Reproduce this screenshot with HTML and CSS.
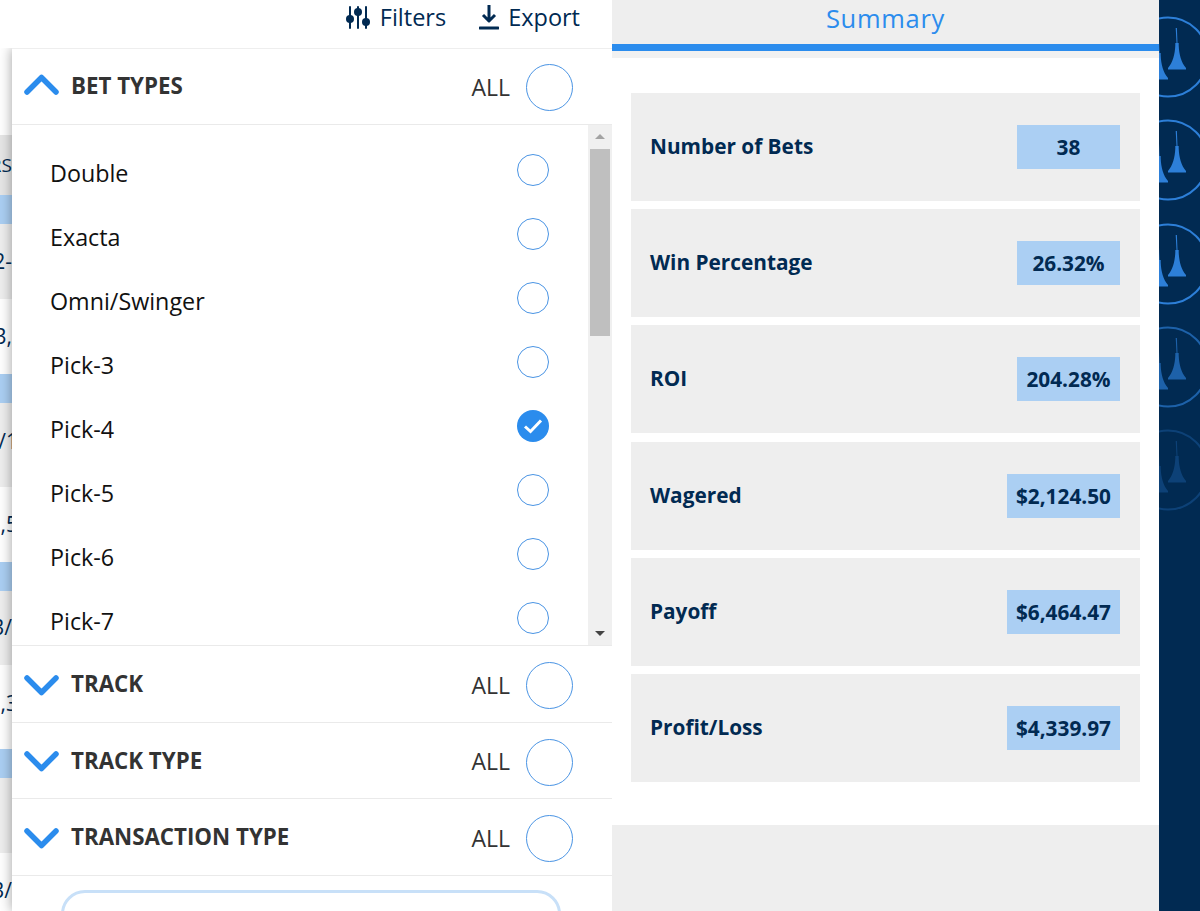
FILE: index.html
```html
<!DOCTYPE html>
<html lang="en">
<head>
  <meta charset="UTF-8">
  <meta name="viewport" content="width=device-width, initial-scale=1.0">
  <title>Summary</title>
  <link rel="stylesheet" href="styles.css">
</head>
<body>
  <div class="page">
    <div class="left">
      <div class="toolbar">
        <button class="tool">
          <svg class="tool-icon" width="26" height="24" viewBox="0 0 26 24">
            <path d="M5 2v21M13 2v21M21 2v21" stroke="#012a52" stroke-width="2" stroke-linecap="round"/>
            <circle cx="5" cy="14" r="4" fill="#012a52"/>
            <circle cx="13" cy="7" r="4" fill="#012a52"/>
            <circle cx="21" cy="17" r="4" fill="#012a52"/>
          </svg>
          Filters
        </button>
        <button class="tool">
          <svg class="tool-icon" width="20" height="26" viewBox="0 0 20 26">
            <path d="M10 1v16M4 11l6 6 6-6" fill="none" stroke="#012a52" stroke-width="3" stroke-linejoin="round"/>
            <path d="M1 24h18" stroke="#012a52" stroke-width="3" stroke-linecap="round"/>
          </svg>
          Export
        </button>
      </div>

      <!-- table behind the popover, only a sliver shows -->
      <div class="table">
        <div class="tr tr-head"><span>RS</span></div>
        <div class="tr tr-blue"></div>
        <div class="tr tr-gray"><span>2-</span></div>
        <div class="tr tr-white"><span>3,</span></div>
        <div class="tr tr-blue"></div>
        <div class="tr tr-gray tr-tall"><span class="cut">/1</span></div>
        <div class="tr tr-white"><span class="cut">,5</span></div>
        <div class="tr tr-blue"></div>
        <div class="tr tr-gray"><span>3/</span></div>
        <div class="tr tr-white tr-tall"><span class="cut">,3</span></div>
        <div class="tr tr-blue"></div>
        <div class="tr tr-gray"><span class="cut">,</span></div>
        <div class="tr tr-white"><span>3/</span></div>
      </div>

      <div class="popover">
        <div class="group">
          <svg class="chevron chevron-up" width="36" height="24" viewBox="0 0 36 24"><path d="M3 20L17.500 5.500 32 20"/></svg>
          <span class="group-title">BET TYPES</span>
          <span class="group-all">ALL</span>
          <span class="radio radio-big"></span>
        </div>
        <div class="list-wrap">
          <ul class="list">
            <li class="item"><span>Double</span><span class="radio"></span></li>
            <li class="item"><span>Exacta</span><span class="radio"></span></li>
            <li class="item"><span>Omni/Swinger</span><span class="radio"></span></li>
            <li class="item"><span>Pick-3</span><span class="radio"></span></li>
            <li class="item"><span>Pick-4</span>
              <span class="radio radio-on">
                <svg width="32" height="32" viewBox="0 0 32 32"><path d="M8 16.500l5.500 5L24 10.500" fill="none" stroke="#fff" stroke-width="3"/></svg>
              </span>
            </li>
            <li class="item"><span>Pick-5</span><span class="radio"></span></li>
            <li class="item"><span>Pick-6</span><span class="radio"></span></li>
            <li class="item"><span>Pick-7</span><span class="radio"></span></li>
          </ul>
          <div class="scrollbar">
            <div class="arrow-up"></div>
            <div class="thumb"></div>
            <div class="arrow-down"></div>
          </div>
        </div>
        <div class="group">
          <svg class="chevron" width="36" height="24" viewBox="0 0 36 24"><path d="M3 5L17.500 19.500 32 5"/></svg>
          <span class="group-title">TRACK</span>
          <span class="group-all">ALL</span>
          <span class="radio radio-big"></span>
        </div>
        <div class="group">
          <svg class="chevron" width="36" height="24" viewBox="0 0 36 24"><path d="M3 5L17.500 19.500 32 5"/></svg>
          <span class="group-title">TRACK TYPE</span>
          <span class="group-all">ALL</span>
          <span class="radio radio-big"></span>
        </div>
        <div class="group">
          <svg class="chevron" width="36" height="24" viewBox="0 0 36 24"><path d="M3 5L17.500 19.500 32 5"/></svg>
          <span class="group-title">TRANSACTION TYPE</span>
          <span class="group-all">ALL</span>
          <span class="radio radio-big"></span>
        </div>
        <div class="apply"></div>
      </div>
    </div>

    <div class="right">
      <div class="tab">Summary</div>
      <div class="tab-shade"></div>
      <div class="cards">
        <div class="card"><span class="card-label">Number of Bets</span><span class="card-value">38</span></div>
        <div class="card"><span class="card-label">Win Percentage</span><span class="card-value">26.32%</span></div>
        <div class="card"><span class="card-label">ROI</span><span class="card-value">204.28%</span></div>
        <div class="card"><span class="card-label">Wagered</span><span class="card-value">$2,124.50</span></div>
        <div class="card"><span class="card-label">Payoff</span><span class="card-value">$6,464.47</span></div>
        <div class="card"><span class="card-label">Profit/Loss</span><span class="card-value">$4,339.97</span></div>
      </div>
      <div class="footer"></div>
    </div>

    <div class="rail">
      <svg width="41" height="911" viewBox="1159 0 41 911">
        <defs>
          <path id="tower" d="M16.700 -29h1.200l.6 15h1.200v2.500c.4 9 2.500 17 7.300 22.500v1.500h-18v-1.500c4.800-5.500 6.900-13.500 7.300-22.500v-2.500h1.200z"/>
          <g id="emblem">
            <circle cx="9" cy="0" r="39.500" fill="none" stroke="#2d7fd8" stroke-width="2"/>
            <use href="#tower" fill="#2d7fd8"/>
            <use href="#tower" x="-18" y="10" fill="#2d7fd8"/>
          </g>
        </defs>
        <use href="#emblem" x="1159" y="57"/>
        <use href="#emblem" x="1159" y="160"/>
        <use href="#emblem" x="1159" y="264"/>
        <use href="#emblem" x="1159" y="367" opacity="0.65"/>
        <use href="#emblem" x="1159" y="470" opacity="0.28"/>
      </svg>
    </div>
  </div>
</body>
</html>
```

FILE: styles.css
```css
* {
  box-sizing: border-box;
}
html, body {
  margin: 0;
  height: 100%;
  overflow: hidden;
}
body {
  font-family: "Open Sans", "Noto Sans", sans-serif;
  color: #012a52;
  background: #fff;
}
.page {
  display: grid;
  grid-template-columns: 612px 547px 41px;
  height: 911px;
}

/* left side */
.left {
  position: relative;
  overflow: hidden;
  background: #fff;
}
.toolbar {
  position: relative;
  z-index: 1;
  display: flex;
  justify-content: flex-end;
  gap: 33px;
  height: 48px;
  padding: 2px 32px 0 0;
  background: #fff;
}
.tool {
  display: flex;
  align-items: center;
  gap: 9px;
  height: 30px;
  padding: 0;
  border: none;
  background: none;
  color: #012a52;
  font-family: inherit;
  font-size: 23.500px;
}
.table {
  width: 12px;
  padding-top: 87px;
  overflow: hidden;
  font-size: 21px;
  line-height: 1;
}
.tr {
  display: flex;
  align-items: center;
  justify-content: flex-end;
  white-space: nowrap;
}
.tr .cut {
  margin-right: -6px;
}
.tr-head {
  height: 60px;
  background: #e6e6e6;
  font-size: 19px;
}
.tr-blue {
  height: 29px;
  background: #abcff3;
}
.tr-gray {
  height: 74.500px;
  background: #eee;
}
.tr-white {
  height: 75px;
  background: #fff;
}
.tr-tall {
  height: 84px;
}
.tr-tall span {
  margin-top: -7px;
}
.popover {
  position: absolute;
  top: 48px;
  left: 12px;
  right: 0;
  bottom: 0;
  background: #fff;
  border-top: 1px solid #eee;
  box-shadow: 0 0 12px rgba(0, 0, 0, 0.38);
}
.group {
  display: flex;
  align-items: center;
  height: 76px;
  padding: 0 39px 0 12px;
  border-bottom: 1px solid #eaeaea;
}
.popover > .group:nth-child(n+3) {
  height: 76.500px;
  padding-top: 2px;
}
.chevron {
  margin-right: 11px;
}
.chevron-up {
  margin-top: -5px;
}
.chevron path {
  fill: none;
  stroke: #2b8ced;
  stroke-width: 5.500;
  stroke-linecap: round;
  stroke-linejoin: round;
}
.group-title {
  margin-top: -2px;
  font-size: 22.300px;
  font-weight: 700;
  color: #333;
}
.group-all {
  margin-left: auto;
  margin-right: 16px;
  font-size: 23px;
  color: #333;
}
.radio {
  display: block;
  width: 32px;
  height: 32px;
  border: 1.500px solid #4a94e4;
  border-radius: 50%;
  background: #fff;
}
.radio-big {
  width: 47px;
  height: 47px;
  margin-top: 2px;
}
.radio-on {
  border: none;
  background: #2b8ced;
}
.radio-on svg {
  display: block;
}
.list-wrap {
  display: flex;
  height: 521px;
  border-bottom: 1px solid #eaeaea;
  overflow: hidden;
}
.list {
  flex: 1;
  margin: 0;
  padding: 13px 0 0 38px;
  list-style: none;
  font-size: 23.300px;
  color: #111;
}
.item {
  display: flex;
  align-items: center;
  justify-content: space-between;
  height: 64px;
  padding-right: 39px;
}
.item > span:first-child {
  margin-top: 5px;
}
.scrollbar {
  display: flex;
  flex-direction: column;
  align-items: center;
  width: 24px;
  background: #f0f0f0;
}
.arrow-up {
  width: 0;
  height: 0;
  margin: 9px 0 10px;
  border: 5px solid transparent;
  border-top: none;
  border-bottom: 5px solid #a3a3a3;
}
.thumb {
  width: 20px;
  height: 187px;
  background: #bfbfbf;
}
.arrow-down {
  width: 0;
  height: 0;
  margin-top: auto;
  margin-bottom: 9px;
  border: 5px solid transparent;
  border-bottom: none;
  border-top: 5px solid #444;
}
.apply {
  width: 500px;
  height: 60px;
  margin: 14px 0 0 49px;
  border: 3px solid #c8e0f8;
  border-radius: 24px;
}

/* right side */
.right {
  display: flex;
  flex-direction: column;
  background: #fff;
}
.tab {
  height: 44px;
  background: #eee;
  color: #2b8ced;
  font-size: 25.500px;
  font-weight: 500;
  line-height: 36px;
  text-align: center;
  letter-spacing: 0.7px;
}
.tab-shade {
  height: 14px;
  border-top: 7px solid #2b8ced;
  background: #f1f1f1;
}
.cards {
  display: flex;
  flex-direction: column;
  gap: 8.200px;
  height: 767px;
  padding: 35px 19px 0;
}
.card {
  display: flex;
  align-items: center;
  justify-content: space-between;
  height: 108px;
  padding: 0 20px;
  background: #eee;
  font-size: 20.800px;
  font-weight: 700;
}
.card-label {
  margin-top: -2px;
  margin-left: -1px;
}
.card-value {
  min-width: 103px;
  height: 44px;
  padding: 0 9px;
  background: #abcff3;
  line-height: 44px;
  text-align: center;
}
.footer {
  flex: 1;
  background: #eee;
}

/* dark strip with the repeating emblem */
.rail {
  background: #012a52;
  overflow: hidden;
}
.rail svg {
  display: block;
}
```
